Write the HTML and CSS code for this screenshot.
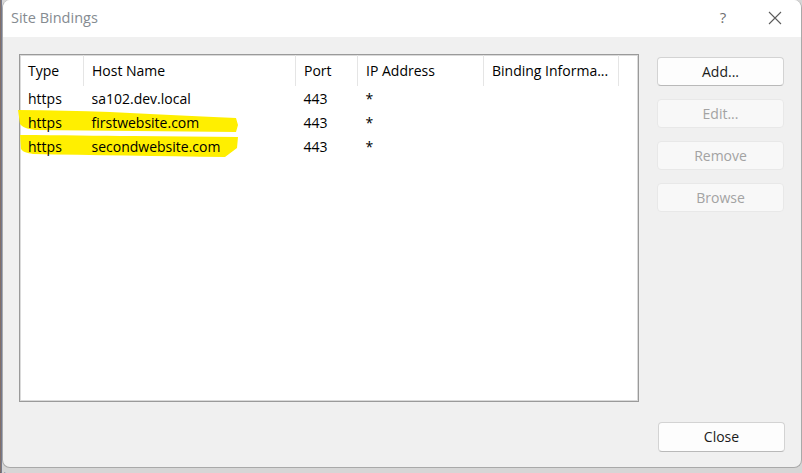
FILE: index.html
```html
<!DOCTYPE html>
<html>
<head>
    <meta charset="utf-8">
    <title>Site Bindings</title>
    <link rel="stylesheet" href="styles.css">
</head>
<body>
<div class="desk">
    <div class="window">
        <div class="titlebar">
            <span class="title">Site Bindings</span>
            <span class="help">?</span>
            <span class="close-x">
                <svg width="14" height="14" viewBox="0 0 14 14"><path d="M1 1 L13 13 M13 1 L1 13" stroke="#5c5c5c" stroke-width="1.1" fill="none"/></svg>
            </span>
        </div>
        <div class="content">
            <div class="main">
                <div class="listview">
                    <svg class="marker" width="620" height="348" viewBox="19 54 620 348">
                        <path d="M18 110 C50 110 80 111 110 112 C150 114 190 116 236 118 L238 125 L236 132 C170 131 100 131 35 130 C27 129 22 127 20 124 Z" fill="#ffef00"/>
                        <path d="M20 135 C60 135 100 136 133 136 C170 136 205 137 238 137 L237 148 L225 157 C160 156 90 155 33 154 C27 153 23 152 21 149 Z" fill="#ffef00"/>
                    </svg>
                    <table class="bindings">
                        <thead>
                        <tr>
                            <th class="c-type">Type</th>
                            <th class="c-host">Host Name</th>
                            <th class="c-port">Port</th>
                            <th class="c-ip">IP Address</th>
                            <th class="c-info">Binding Informa...</th>
                            <th class="c-rest"></th>
                        </tr>
                        </thead>
                        <tbody>
                        <tr><td>https</td><td>sa102.dev.local</td><td>443</td><td>*</td><td></td><td></td></tr>
                        <tr><td>https</td><td>firstwebsite.com</td><td>443</td><td>*</td><td></td><td></td></tr>
                        <tr><td>https</td><td>secondwebsite.com</td><td>443</td><td>*</td><td></td><td></td></tr>
                        </tbody>
                    </table>
                </div>
                <div class="side">
                    <span class="btn">Add...</span>
                    <span class="btn disabled">Edit...</span>
                    <span class="btn disabled">Remove</span>
                    <span class="btn disabled">Browse</span>
                </div>
            </div>
            <div class="footer">
                <span class="btn">Close</span>
            </div>
        </div>
    </div>
    <div class="peek">ttor</div>
</div>
</body>
</html>
```

FILE: styles.css
```css
html, body{
    margin: 0;
    padding: 0;
}
body{
    width: 802px;
    height: 473px;
    overflow: hidden;
    background: #d6d6d6;
    font-family: "Segoe UI", "Open Sans", "Noto Sans", sans-serif;
    font-size: 14px;
    color: #000;
}
.desk{
    height: 473px;
    background: linear-gradient(to right, #8a6a55 0, #6d7fa0 2px, #d6d6d6 2px);
}
.window{
    margin-left: 2px;
    width: 800px;
    height: 468px;
    box-sizing: border-box;
    border: 1px solid #a9a9a9;
    border-top: none;
    border-radius: 8px;
    overflow: hidden;
    display: flex;
    flex-direction: column;
    background: #f0f0f0;
}
.titlebar{
    height: 37px;
    flex: none;
    background: #fff;
    display: flex;
    align-items: center;
    padding-left: 8px;
}
.title{
    flex: 1;
    font-size: 14.5px;
    color: #858b91;
    padding-bottom: 2px;
}
.help{
    width: 58px;
    font-size: 15px;
    color: #707070;
    text-align: center;
    padding-bottom: 3px;
}
.close-x{
    width: 46px;
    margin-right: 3px;
    display: flex;
    justify-content: center;
    padding-bottom: 2px;
}
.content{
    flex: 1;
    display: flex;
    flex-direction: column;
    padding: 17px 16px 15px 16px;
}
.main{
    display: flex;
    gap: 18px;
}
.listview{
    position: relative;
    width: 620px;
    height: 348px;
    box-sizing: border-box;
    border: 1px solid #9a9a9a;
    box-shadow: inset 0 0 0 1px #dadada;
    background: #fff;
}
.marker{
    position: absolute;
    left: -1px;
    top: -1px;
    overflow: visible;
}
table.bindings{
    position: relative;
    border-collapse: collapse;
    table-layout: fixed;
    width: 618px;
}
table.bindings th{
    height: 31px;
    font-weight: normal;
    text-align: left;
    padding: 0 0 0 8px;
    border-right: 1px solid #e5e5e5;
    white-space: nowrap;
    overflow: hidden;
}
table.bindings th.c-type{
    padding-left: 8px;
}
table.bindings th.c-rest{
    border-right: none;
}
.c-type{ width: 55px; }
.c-host{ width: 203px; }
.c-port{ width: 53px; }
.c-ip{ width: 117px; }
.c-info{ width: 126px; }
table.bindings td{
    height: 24px;
    padding: 0 0 0 8px;
    white-space: nowrap;
}
.side{
    display: flex;
    flex-direction: column;
    gap: 13px;
    padding-top: 3px;
}
.btn{
    width: 127px;
    height: 29px;
    box-sizing: border-box;
    display: flex;
    align-items: center;
    justify-content: center;
    border: 1px solid #d3d3d3;
    border-bottom-color: #b9b9b9;
    border-radius: 4px;
    background: #fdfdfd;
    color: #1b1b1b;
    padding-bottom: 1px;
}
.btn.disabled{
    background: #f8f8f8;
    border-color: #e8e8e8;
    color: #a3a3a3;
}
.footer{
    margin-top: auto;
    display: flex;
    justify-content: flex-end;
}
.footer .btn{
    height: 30px;
}
.peek{
    margin-top: 1px;
    font-size: 13px;
    line-height: 14px;
    color: #20304a;
    margin-left: -2px;
}
```
